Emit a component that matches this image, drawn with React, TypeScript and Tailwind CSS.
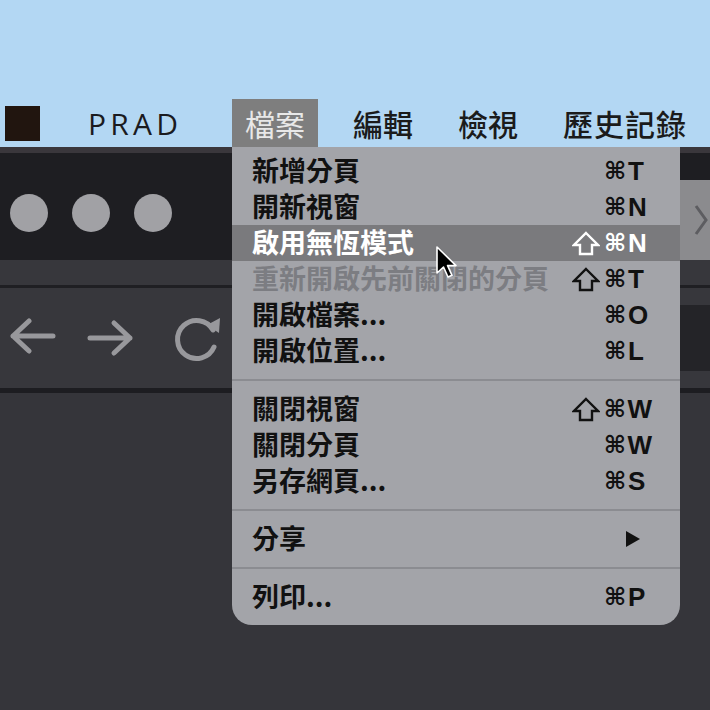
import React from "react";

type Item =
  | { kind: "item"; label: string; shift?: boolean; key?: string; arrow?: boolean; active?: boolean; disabled?: boolean }
  | { kind: "sep" };

const items: Item[] = [
  { kind: "item", label: "新增分頁", key: "T" },
  { kind: "item", label: "開新視窗", key: "N" },
  { kind: "item", label: "啟用無恆模式", shift: true, key: "N", active: true },
  { kind: "item", label: "重新開啟先前關閉的分頁", shift: true, key: "T", disabled: true },
  { kind: "item", label: "開啟檔案...", key: "O" },
  { kind: "item", label: "開啟位置...", key: "L" },
  { kind: "sep" },
  { kind: "item", label: "關閉視窗", shift: true, key: "W" },
  { kind: "item", label: "關閉分頁", key: "W" },
  { kind: "item", label: "另存網頁...", key: "S" },
  { kind: "sep" },
  { kind: "item", label: "分享", arrow: true },
  { kind: "sep" },
  { kind: "item", label: "列印...", key: "P" },
];

const cjk = "font-['Noto_Sans_CJK_TC',sans-serif]";

function Shortcut({ shift, k, arrow, light }: { shift?: boolean; k?: string; arrow?: boolean; light?: boolean }) {
  const ink = light ? "#ffffff" : "#111111";
  if (arrow) {
    return (
      <div className="w-[80px] mr-[28px] flex items-center pl-[53px]">
        <svg width="16" height="18" viewBox="0 0 16 18">
          <path d="M1 1 L15 9 L1 17 Z" fill={ink} />
        </svg>
      </div>
    );
  }
  return (
    <div className="w-[80px] mr-[28px] flex items-center leading-none">
      <span className="w-[32px] flex items-center">
        {shift && (
          <svg width="28" height="25" viewBox="0 0 28 25">
            <path d="M14 2 L26 14 L20 14 L20 23 L8 23 L8 14 L2 14 Z" fill="none" stroke={ink} strokeWidth="2.4" strokeLinejoin="miter" />
          </svg>
        )}
      </span>
      <span className="w-[24px] text-[24px] font-['DejaVu_Sans',sans-serif]">⌘</span>
      <span className="text-[26px] font-bold font-['Liberation_Sans',sans-serif]">{k}</span>
    </div>
  );
}

function FileMenu() {
  return (
    <div className={`absolute left-[232px] top-[147px] w-[448px] bg-[#a3a4a9] rounded-b-[20px] pt-[6px] pb-[10px] ${cjk}`}>
      {items.map((it, i) =>
        it.kind === "sep" ? (
          <div key={i} className="h-[22px] flex items-center">
            <div className="h-[2px] w-full bg-[#8b8c91]" />
          </div>
        ) : (
          <div
            key={i}
            className={`h-[36px] flex items-center justify-between pl-[20px] font-bold text-[27px] leading-none ${
              it.active ? "bg-[#7a7a7d] text-white" : it.disabled ? "text-[#7c7d82]" : "text-[#111111]"
            }`}
          >
            <span className="-mt-[3px]">{it.label}</span>
            <div className={it.disabled ? "text-[#111111]" : ""}>
              <Shortcut shift={it.shift} k={it.key} arrow={it.arrow} light={it.active} />
            </div>
          </div>
        )
      )}
    </div>
  );
}

export default function App() {
  return (
    <div className="relative w-[710px] h-[710px] overflow-hidden bg-[#35353a]">
      {/* desktop menu bar */}
      <div className="h-[147px] bg-[#b3d7f3] flex items-end">
        <div className="flex items-center h-[48px] w-full">
          <div className="ml-[5px] w-[35px] h-[35px] bg-[#21150f]" />
          <div className="ml-[48px] text-[30px] tracking-[0.14em] text-[#1b1b1f] font-['Open_Sans',sans-serif]">
            PRAD
          </div>
          <div className={`ml-[50px] h-[48px] px-[13px] flex items-center bg-[#7e7e7e] text-[#e8e8e8] text-[30px] ${cjk}`}>
            檔案
          </div>
          <div className={`ml-[22px] px-[13px] text-[30px] font-medium text-[#1b1b1b] ${cjk}`}>編輯</div>
          <div className={`ml-[19px] px-[13px] text-[30px] font-medium text-[#1b1b1b] ${cjk}`}>檢視</div>
          <div className={`ml-[19px] px-[13px] text-[30px] font-medium tracking-[1px] text-[#1b1b1b] ${cjk}`}>歷史記錄</div>
        </div>
      </div>

      {/* browser window */}
      <div className="h-[6px] bg-[#3a373c]" />
      <div className="h-[107px] bg-[#1e1e22] flex">
        <div className="flex items-center gap-[24px] pl-[10px] pt-[13px]">
          <div className="w-[38px] h-[38px] rounded-full bg-[#a1a1a5]" />
          <div className="w-[38px] h-[38px] rounded-full bg-[#a1a1a5]" />
          <div className="w-[38px] h-[38px] rounded-full bg-[#a1a1a5]" />
        </div>
        <div className="ml-auto self-end h-[80px] w-[110px] bg-[#8b8b8e] flex items-center justify-end pr-[2px]">
          <svg width="14" height="32" viewBox="0 0 14 32">
            <path d="M2 2 L12 16 L2 30" fill="none" stroke="#5d5d61" strokeWidth="3" />
          </svg>
        </div>
      </div>
      <div className="h-[25px] bg-[#37373c]" />
      <div className="h-[3px] bg-[#1f1f23]" />
      <div className="h-[100px] bg-[#37373c] flex items-center">
        <svg className="ml-[8px]" width="50" height="40" viewBox="0 0 50 40">
          <path d="M5 18 L45 18 M5 18 L21 3 M5 18 L21 33" fill="none" stroke="#98989c" strokeWidth="5" strokeLinecap="round" strokeLinejoin="round" />
        </svg>
        <svg className="ml-[28px]" width="50" height="40" viewBox="0 0 50 40">
          <path d="M4 20 L44 20 M44 20 L28 5 M44 20 L28 35" fill="none" stroke="#98989c" strokeWidth="5" strokeLinecap="round" strokeLinejoin="round" />
        </svg>
        <svg className="ml-[38px]" width="50" height="50" viewBox="0 0 50 50">
          <path d="M39 17 A19 19 0 1 0 40 34" fill="none" stroke="#98989c" strokeWidth="5" strokeLinecap="round" />
          <path d="M33 12 L46 5 L45 20 Z" fill="#98989c" />
        </svg>
        <div className="ml-[30px] flex-1 h-[66px] bg-[#242428] rounded-l-[8px]" />
      </div>
      <div className="h-[5px] bg-[#1d1d21]" />

      <FileMenu />

      {/* mouse pointer */}
      <svg className="absolute left-[435px] top-[245px]" width="24" height="36" viewBox="0 0 24 36">
        <path d="M2 2 L2 28 L8.5 22 L13 32 L17 30.3 L12.6 20.6 L21 20.6 Z" fill="#000" stroke="#fff" strokeWidth="1.6" strokeLinejoin="round" />
      </svg>
    </div>
  );
}
